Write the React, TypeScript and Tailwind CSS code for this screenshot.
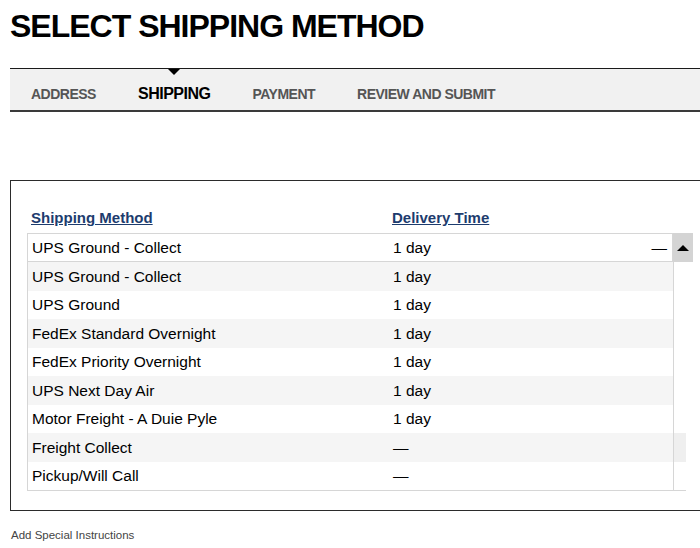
const tabs = ['ADDRESS', 'SHIPPING', 'PAYMENT', 'REVIEW AND SUBMIT'];

const methods = [
  { name: 'UPS Ground - Collect', time: '1 day' },
  { name: 'UPS Ground', time: '1 day' },
  { name: 'FedEx Standard Overnight', time: '1 day' },
  { name: 'FedEx Priority Overnight', time: '1 day' },
  { name: 'UPS Next Day Air', time: '1 day' },
  { name: 'Motor Freight - A Duie Pyle', time: '1 day' },
  { name: 'Freight Collect', time: '—' },
  { name: 'Pickup/Will Call', time: '—' },
];

export default function App() {
  return (
    <div className="h-[548px] w-full overflow-hidden bg-white font-['Liberation_Sans',Arial,sans-serif] text-black">
      {/* Title */}
      <h1 className="ml-[10px] mt-[6px] h-[40px] text-[32px] leading-[40px] font-bold tracking-[-1px] text-black">
        SELECT SHIPPING METHOD
      </h1>

      {/* Steps */}
      <nav className="ml-[10px] mt-[22px] flex h-[44px] w-[720px] gap-[42px] border-t border-b-2 border-t-[#1a1a1a] border-b-[#3a3a3a] bg-[#f1f1f1] pl-[21px]">
        {tabs.map((tab) => {
          const active = tab === 'SHIPPING';
          return (
            <div key={tab} className="relative flex items-end pb-[6px]">
              {active && (
                <span className="absolute left-1/2 top-0 -translate-x-1/2 border-x-[6px] border-t-[6px] border-x-transparent border-t-black" />
              )}
              <span
                className={
                  active
                    ? 'text-[16px] leading-[20px] font-bold tracking-[-0.5px] text-black'
                    : 'text-[14px] leading-[20px] font-bold tracking-[-0.5px] text-[#555]'
                }
              >
                {tab}
              </span>
            </div>
          );
        })}
      </nav>

      {/* Shipping panel */}
      <div className="ml-[10px] mt-[68px] w-[720px] border border-[#2b2b2b] px-[16px] pt-[27px] pb-[19px]">
        <div className="flex h-[20px] text-[15px] leading-[20px] font-bold text-[#1d3c6e] underline">
          <div className="w-[361px] pl-1">Shipping Method</div>
          <div className="pl-1">Delivery Time</div>
        </div>

        <div className="mt-[5px] w-[666px]">
          {/* selected value */}
          <div className="flex">
            <div className="flex h-[29px] w-[647px] items-center border border-[#d6d6d6] bg-white text-[15.5px]">
              <div className="w-[361px] pl-1">{methods[0].name}</div>
              <div className="pl-1">{methods[0].time}</div>
              <div className="ml-auto pr-[5px]">—</div>
            </div>
            <div className="flex h-[29px] w-[20px] items-center justify-center bg-[#d4d4d4]">
              <span className="border-x-[6px] border-b-[6px] border-x-transparent border-b-black" />
            </div>
          </div>

          {/* options */}
          <div className="w-[659px] border-b border-[#d6d6d6]">
            {methods.map((m, i) => (
              <div key={m.name} className="flex h-[28.5px]">
                <div
                  className={
                    'flex w-[647px] items-center border-x border-[#d6d6d6] text-[15.5px] ' +
                    (i % 2 === 0 ? 'bg-[#f5f5f5]' : 'bg-white')
                  }
                >
                  <div className="w-[361px] pl-1">{m.name}</div>
                  <div className="pl-1">{m.time}</div>
                </div>
                <div className={m.name === 'Freight Collect' ? 'w-[12px] bg-[#efefef]' : 'w-[12px]'} />
              </div>
            ))}
          </div>
        </div>
      </div>

      <p className="ml-[11px] mt-[16px] text-[11.5px] leading-[16px] text-[#444]">Add Special Instructions</p>
    </div>
  );
}
